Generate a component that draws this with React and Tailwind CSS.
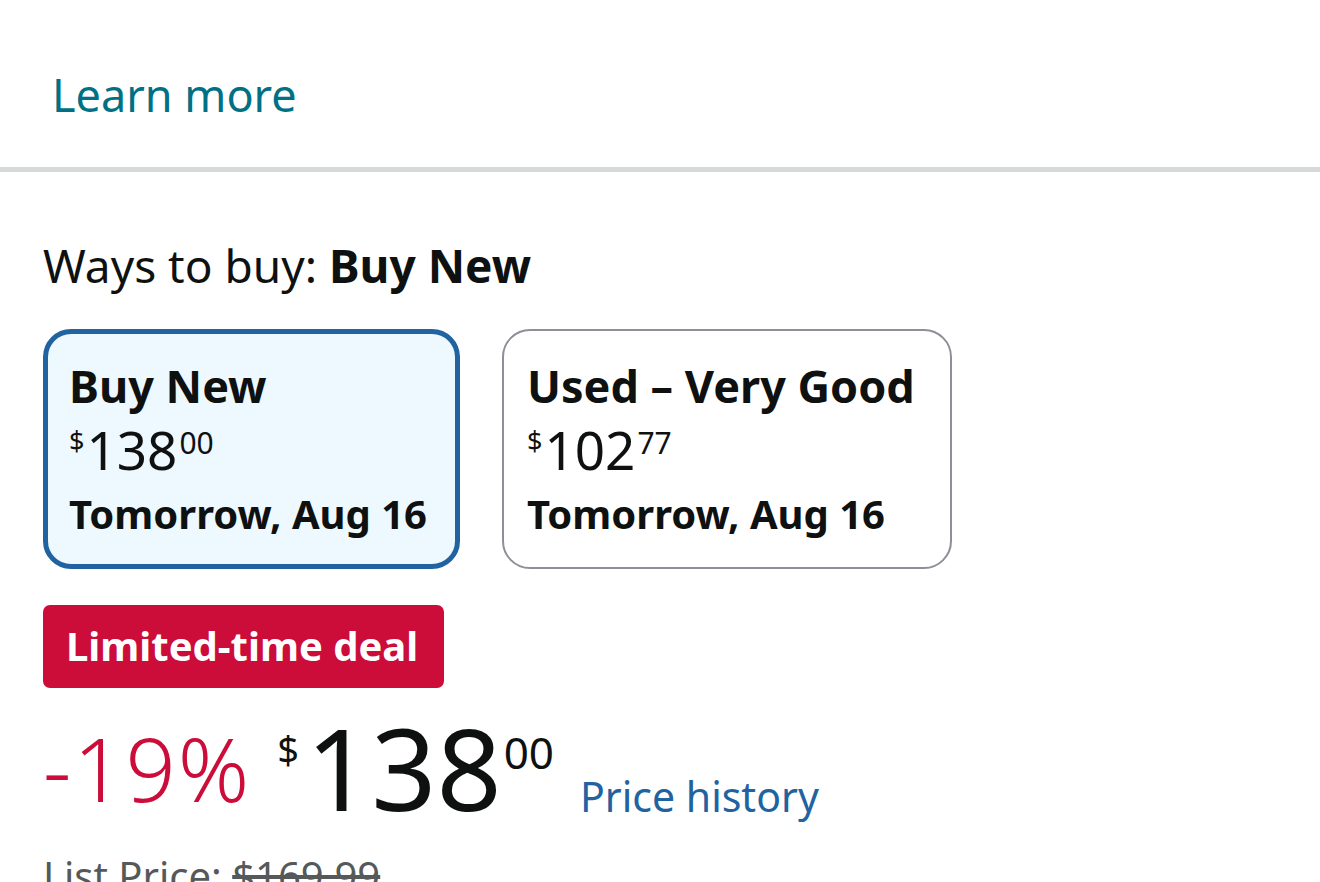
const font = { fontFamily: '"Noto Sans", "Open Sans", sans-serif' };

const SmallPrice = ({ whole, fraction }) => (
  <div className="flex items-start text-[#0f1111]">
    <span className="mt-[4px] mr-[2px] text-[27px] leading-none">$</span>
    <span className="text-[53px] leading-none">{whole}</span>
    <span className="mt-[5px] ml-[2px] text-[30px] leading-none">{fraction}</span>
  </div>
);

const OptionCard = ({ title, whole, fraction, date, selected }) => (
  <div
    className={
      selected
        ? 'flex h-[240px] w-[417px] flex-col rounded-[28px] border-[5px] border-[#2162a1] bg-[#edf8ff] pl-[21px] pt-[27px]'
        : 'flex h-[240px] w-[450px] flex-col rounded-[28px] border-2 border-[#8d9096] bg-white pl-[23px] pt-[30px]'
    }
  >
    <div className="text-[45px] font-bold leading-[50px] text-[#0f1111]">{title}</div>
    <div className="mt-[12px]">
      <SmallPrice whole={whole} fraction={fraction} />
    </div>
    <div className="mt-[14px] text-[40px] font-bold leading-[48px] text-[#0f1111]">{date}</div>
  </div>
);

export default function App() {
  return (
    <div className="h-[882px] w-[1320px] overflow-hidden bg-white" style={font}>
      <div className="pl-[52px] pt-[68px] pb-[46px]">
        <a className="text-[45px] leading-[53px] text-[#007185]">Learn more</a>
      </div>
      <div className="h-[5px] bg-[#d5d9d9]" />

      <div className="px-[43px]">
        <div className="mt-[67px] text-[46px] leading-[53px] text-[#0f1111]">
          Ways to buy: <span className="font-bold">Buy New</span>
        </div>

        <div className="mt-[37px] flex gap-[42px]">
          <OptionCard selected title="Buy New" whole="138" fraction="00" date="Tomorrow, Aug 16" />
          <OptionCard title="Used – Very Good" whole="102" fraction="77" date="Tomorrow, Aug 16" />
        </div>

        <div className="mt-[36px] flex h-[83px] w-[401px] items-center rounded-[7px] bg-[#cc0c39] pl-[23px]">
          <span className="mt-[-2px] text-[40px] font-bold leading-none text-white">Limited-time deal</span>
        </div>

        <div className="mt-[22px] flex items-start">
          <span className="mt-[14px] text-[88px] font-light leading-none tracking-[2px] text-[#cc0c39]">-19%</span>
          <div className="ml-[26px] flex items-start text-[#0f1111]">
            <span className="mt-[20px] mr-[7px] text-[38px] leading-none">$</span>
            <span className="text-[114px] leading-none">138</span>
            <span className="mt-[20px] ml-[2px] text-[44px] leading-none">00</span>
          </div>
          <a className="ml-[26px] mt-[66px] text-[41px] leading-none text-[#2162a1]">Price history</a>
        </div>

        <div className="mt-[25px] text-[40px] leading-[53px] text-[#565959]">
          List Price: <span className="line-through">$169.99</span>
        </div>
      </div>
    </div>
  );
}
